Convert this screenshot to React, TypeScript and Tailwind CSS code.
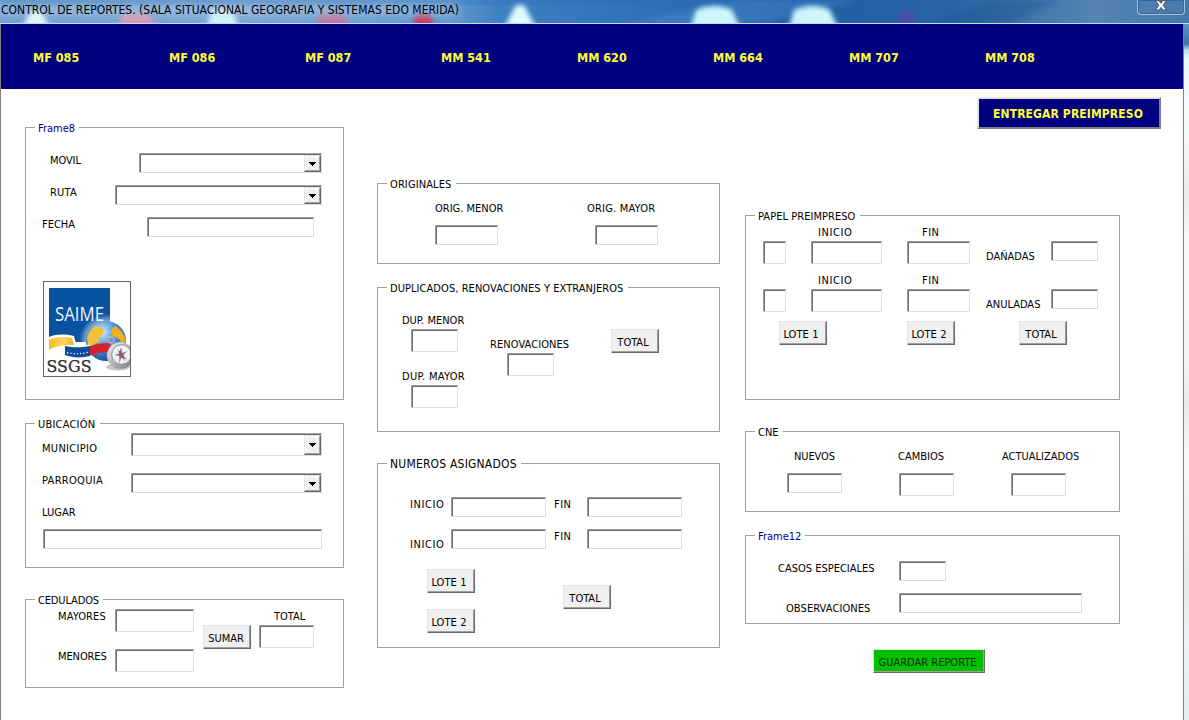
import type { ReactNode } from "react";

type BoxProps = { className: string; children?: ReactNode };

function Label({ className, children }: BoxProps) {
  return (
    <div className={`h-[14px] shrink-0 whitespace-nowrap text-[11px] leading-[16px] ${className}`}>
      {children}
    </div>
  );
}

function Field({ className }: { className: string }) {
  return (
    <div
      className={`shrink-0 border border-t-[#a0a0a0] border-r-[#dcdcdc] border-b-[#dcdcdc] border-l-[#a0a0a0] ${className}`}
    >
      <div className="h-full w-full border-t border-l border-[#696969] bg-white" />
    </div>
  );
}

function Combo({ className }: { className: string }) {
  return (
    <div
      className={`shrink-0 border border-t-[#a0a0a0] border-r-[#dcdcdc] border-b-[#dcdcdc] border-l-[#a0a0a0] ${className}`}
    >
      <div className="flex h-full w-full justify-end border-t border-l border-[#696969] bg-white">
        <div className="flex w-[17px] items-center justify-center border border-t-[#e3e3e3] border-r-[#696969] border-b-[#696969] border-l-[#e3e3e3] bg-[#f0f0f0] shadow-[inset_-1px_-1px_0_#a0a0a0,inset_1px_1px_0_#ffffff]">
          <svg width="7" height="4" viewBox="0 0 7 4" shapeRendering="crispEdges">
            <path d="M0 0h7v1h-1v1h-1v1h-1v1h-1v-1h-1v-1h-1v-1h-1z" fill="#000" />
          </svg>
        </div>
      </div>
    </div>
  );
}

function Button({ className, children }: BoxProps) {
  return (
    <button
      className={`h-[24px] w-[48px] shrink-0 whitespace-nowrap border border-t-[#e3e3e3] border-r-[#696969] border-b-[#696969] border-l-[#e3e3e3] bg-[#f0f0f0] pt-[4px] text-center text-[11px] leading-[18px] shadow-[inset_-1px_-1px_0_#a0a0a0] ${className}`}
    >
      {children}
    </button>
  );
}

function Frame({
  className,
  legend,
  legendClass,
  children,
}: {
  className: string;
  legend: string;
  legendClass: string;
  children: ReactNode;
}) {
  return (
    <section className={`flex shrink-0 flex-col border border-[#a0a0a0] ${className}`}>
      <h2
        className={`-mt-[8px] ml-[9px] h-[14px] shrink-0 whitespace-nowrap bg-white pl-[3px] text-[11px] leading-[17px] ${legendClass}`}
      >
        {legend}
      </h2>
      {children}
    </section>
  );
}

const Row = ({ className, children }: BoxProps) => (
  <div className={`flex shrink-0 items-start ${className}`}>{children}</div>
);

const MENU = ["MF 085", "MF 086", "MF 087", "MM 541", "MM 620", "MM 664", "MM 707", "MM 708"];

function TitleBar() {
  return (
    <header className="relative flex h-[24px] justify-between overflow-hidden border-b border-[#c5d9ee] bg-[linear-gradient(90deg,#6f9fd0_0%,#7ba5d3_20%,#5f97cf_38%,#3f80c4_42%,#3577bd_50%,#1f5fa6_68%,#2a64a4_80%,#5684b4_92%,#4478ae_100%)]">
      <svg className="absolute inset-0" width="1189" height="24" viewBox="0 0 1189 24">
        <defs>
          <filter id="soft" x="-50%" y="-50%" width="200%" height="200%">
            <feGaussianBlur stdDeviation="2.6" />
          </filter>
          <filter id="halo" x="-20%" y="-80%" width="140%" height="260%">
            <feGaussianBlur stdDeviation="5" />
          </filter>
        </defs>
        <path d="M0 0H700L640 4H0z" fill="#2868ad" opacity=".45" filter="url(#soft)" />
        <path d="M620 24L740 0H860L760 24z" fill="#5d9bd8" opacity=".3" filter="url(#soft)" />
        <path d="M930 24L990 0H1060L1010 24z" fill="#16508f" opacity=".35" filter="url(#soft)" />
        <g filter="url(#soft)">
          <path d="M22 28L31 10h10l9 18z" fill="#e2f8ff" />
          <path d="M116 28l8-15h22l14 15z" fill="#d39bb4" />
          <path d="M207 28l5-20h20l7 20z" fill="#d2f4fb" />
          <path d="M312 28l10-15h22l6 15z" fill="#b7799f" />
          <path d="M411 28l6-14h12l8 14z" fill="#c33c63" />
          <path d="M503 30l13-25h8l13 25z" fill="#dffcff" />
          <path d="M690 30l6-20q18-8 36 0l9 20z" fill="#cdf6fd" />
          <path d="M788 30l6-20q20-8 36 0l9 20z" fill="#cdf6fd" />
          <path d="M897 25l6-16h6l8 16z" fill="#4b4ba8" />
        </g>
        <rect x="-6" y="5" width="466" height="10" rx="5" fill="#c3d8ee" opacity=".5" filter="url(#halo)" />
      </svg>
      <h1 className="relative ml-[1px] mt-[2px] h-[16px] whitespace-nowrap text-[12px] leading-[16px] tracking-[0.015px] text-black">
        CONTROL DE REPORTES. (SALA SITUACIONAL GEOGRAFIA Y SISTEMAS EDO MERIDA)
      </h1>
      <div className="relative mr-[4px] flex h-[15px] w-[48px] justify-center rounded-b-[4px] border border-t-0 border-[#a9c3de] bg-[#4f7fb2]/40 shadow-[inset_0_0_0_1px_#39659a]">
        <svg width="14" height="11" viewBox="0 0 14 11">
          <path d="M1.500.6h3.500L7 3.300 9 .6h3.500L9.100 5.300l3.400 4.800H9L7 7.400 5 10.100H1.500l3.400-4.800z" fill="#fff" stroke="#3c4656" strokeWidth=".9" />
        </svg>
      </div>
    </header>
  );
}

function Logo() {
  return (
    <svg className="ml-[17px] mt-[32px] shrink-0" width="88" height="96" viewBox="0 0 88 96">
      <defs>
        <radialGradient id="globe" cx="40%" cy="28%" r="75%">
          <stop offset="0" stopColor="#d5ecfb" />
          <stop offset=".4" stopColor="#5f9cdb" />
          <stop offset="1" stopColor="#174f9f" />
        </radialGradient>
        <radialGradient id="glow">
          <stop offset=".55" stopColor="#fff" stopOpacity=".85" />
          <stop offset="1" stopColor="#fff" stopOpacity="0" />
        </radialGradient>
        <linearGradient id="metal" x1="0" y1="0" x2="1" y2="1">
          <stop offset="0" stopColor="#f4f4f4" />
          <stop offset=".5" stopColor="#b5b5b8" />
          <stop offset="1" stopColor="#77787c" />
        </linearGradient>
        <linearGradient id="gold" x1="0" y1="0" x2="1" y2="0">
          <stop offset="0" stopColor="#f4bd22" />
          <stop offset=".6" stopColor="#fbd560" />
          <stop offset="1" stopColor="#eeb01d" />
        </linearGradient>
        <clipPath id="frame">
          <rect x="1" y="1" width="86" height="94" />
        </clipPath>
      </defs>
      <rect x=".5" y=".5" width="87" height="95" fill="#fff" stroke="#646464" />
      <g clipPath="url(#frame)">
        <rect x="6" y="7" width="61" height="54" fill="#0753a1" />
        <circle cx="63" cy="60" r="27" fill="url(#glow)" />
        <text x="12" y="39.500" fontSize="20.500" textLength="49" lengthAdjust="spacingAndGlyphs" fill="#eef6ff" fontFamily="'Open Sans','Noto Sans',sans-serif">
          SAIME
        </text>
        <circle cx="63" cy="60" r="20" fill="url(#globe)" />
        <path d="M44 58c1-6 4-10 8-13l5 1 4 3-1 4-4 3v5l-5 2-2 4-4-3z" fill="#f2c13c" />
        <path d="M68 49l4-4c5 3 10 8 11 16l-4 1-4-5-6-2z" fill="#f0ae22" />
        <path d="M64 72l7-2 2 5-5 3z" fill="#e9b53a" />
        <path d="M6 56c8-3 15-3 25-1l2 8 14 1v13c-8 2-16 1-25-1l-1-9c-6-1-10 0-15 3z" fill="#fff" />
        <path d="M6 58.500c9-3 17-3 23-1.500l2 7c-8 0-17 0-25 5z" fill="url(#gold)" />
        <path d="M22 65c9 2 17 1.500 25 0v10c-9 2-17 2-25-1z" fill="#0d4b9b" />
        <path d="M24 71.500c8 1.800 14 1.500 22-.3" fill="none" stroke="#fff" strokeWidth="1.300" strokeDasharray="1.200 2.100" />
        <path d="M47 65c7-2 13-3 20-3v9c-7 0-13 1-20 3.500z" fill="#d8202d" />
        <ellipse cx="75" cy="86" rx="12" ry="3.500" fill="#8b8b90" opacity=".5" />
        <circle cx="68" cy="59" r="3" fill="none" stroke="#b9b2aa" strokeWidth="1.300" />
        <circle cx="77.500" cy="74.500" r="13.500" fill="url(#metal)" />
        <circle cx="78.500" cy="73.500" r="9.800" fill="#eef0f2" stroke="#8d8f94" strokeWidth="1" />
        <path d="M78 66l1.300 6 5-2-4 4 3.500 5-5-3-2.500 6v-7l-5-1 5-1.500z" fill="#6d7d9a" />
        <path d="M74.500 68l4.500 5 3 7-4.500-5z" fill="#c83a3a" />
        <text x="3.500" y="90.500" fontSize="16" textLength="45" lengthAdjust="spacingAndGlyphs" fill="#2b2b2b" stroke="#2b2b2b" strokeWidth=".25" fontFamily="'DejaVu Serif','Liberation Serif',serif">
          SSGS
        </text>
      </g>
    </svg>
  );
}

function LeftColumn() {
  return (
    <div className="ml-[24px] flex w-[319px] shrink-0 flex-col pt-[38px]">
      <Frame className="h-[273px]" legend="Frame8" legendClass="w-[44px] text-[#00008b]">
        <Row className="mt-[19px] h-[32px]">
          <Label className="ml-[24px] w-[60px] tracking-[-0.1px]">MOVIL</Label>
          <Combo className="ml-[29px] h-[20px] w-[183px]" />
        </Row>
        <Row className="h-[32px]">
          <Label className="ml-[24px] w-[60px] tracking-[0.2px]">RUTA</Label>
          <Combo className="ml-[5px] h-[20px] w-[207px]" />
        </Row>
        <Row className="h-[32px]">
          <Label className="ml-[16px] w-[60px]">FECHA</Label>
          <Field className="ml-[45px] h-[20px] w-[167px]" />
        </Row>
        <Logo />
      </Frame>

      <Frame className="mt-[23px] h-[145px]" legend="UBICACIÓN" legendClass="w-[65px] tracking-[0.2px]">
        <Row className="mt-[3px] h-[40px]">
          <Label className="ml-[16px] mt-[8px] w-[80px] tracking-[0.3px]">MUNICIPIO</Label>
          <Combo className="ml-[9px] h-[23px] w-[191px]" />
        </Row>
        <Row className="h-[32px]">
          <Label className="ml-[16px] w-[80px] tracking-[0.3px]">PARROQUIA</Label>
          <Combo className="ml-[9px] h-[20px] w-[191px]" />
        </Row>
        <Label className="ml-[16px] w-[80px]">LUGAR</Label>
        <Field className="ml-[17px] mt-[10px] h-[20px] w-[279px]" />
      </Frame>

      <Frame className="mt-[31px] h-[89px]" legend="CEDULADOS" legendClass="w-[68px] tracking-[-0.15px]">
        <Row className="mt-[3px]">
          <div className="ml-[32px] flex w-[137px] flex-col gap-[17px]">
            <Row className="h-[23px]">
              <Label className="w-[57px] tracking-[0.1px]">MAYORES</Label>
              <Field className="h-[23px] w-[79px]" />
            </Row>
            <Row className="h-[23px]">
              <Label className="w-[57px] tracking-[-0.1px]">MENORES</Label>
              <Field className="h-[23px] w-[79px]" />
            </Row>
          </div>
          <Button className="ml-[8px] mt-[16px] pr-[2px]">SUMAR</Button>
          <div className="ml-[8px] flex flex-col gap-[2px]">
            <Label className="ml-[15px] w-[40px]">TOTAL</Label>
            <Field className="h-[23px] w-[55px]" />
          </div>
        </Row>
      </Frame>
    </div>
  );
}

function MiddleColumn() {
  return (
    <div className="ml-[33px] flex w-[343px] shrink-0 flex-col pt-[94px]">
      <Frame className="h-[81px]" legend="ORIGINALES" legendClass="w-[69px] tracking-[0.1px]">
        <Row className="mt-[11px]">
          <div className="ml-[57px] flex w-[152px] flex-col">
            <Label className="w-[80px]">ORIG. MENOR</Label>
            <Field className="mt-[10px] h-[20px] w-[63px]" />
          </div>
          <div className="flex flex-col">
            <Label className="w-[80px] tracking-[0.2px]">ORIG. MAYOR</Label>
            <Field className="ml-[8px] mt-[10px] h-[20px] w-[63px]" />
          </div>
        </Row>
      </Frame>

      <Frame
        className="mt-[23px] h-[145px]"
        legend="DUPLICADOS, RENOVACIONES Y EXTRANJEROS"
        legendClass="w-[241px] tracking-[0.06px]"
      >
        <Row className="mt-[19px]">
          <div className="ml-[24px] flex w-[88px] flex-col">
            <Label className="w-[70px]">DUP. MENOR</Label>
            <Field className="ml-[9px] mt-[2px] h-[23px] w-[47px]" />
            <Label className="mt-[17px] w-[70px] tracking-[0.3px]">DUP. MAYOR</Label>
            <Field className="ml-[9px] mt-[2px] h-[23px] w-[47px]" />
          </div>
          <div className="mt-[24px] flex w-[121px] flex-col">
            <Label className="w-[80px] tracking-[0.07px]">RENOVACIONES</Label>
            <Field className="ml-[17px] mt-[2px] h-[23px] w-[47px]" />
          </div>
          <Button className="mt-[16px] pr-[4px]">TOTAL</Button>
        </Row>
      </Frame>

      <Frame
        className="mt-[31px] h-[185px]"
        legend="NUMEROS ASIGNADOS"
        legendClass="w-[134px] text-[12px] tracking-[0.2px]"
      >
        <Row className="mt-[27px] h-[32px]">
          <Label className="ml-[32px] w-[41px] tracking-[0.6px]">INICIO</Label>
          <Field className="h-[20px] w-[95px]" />
          <Label className="ml-[8px] w-[33px] tracking-[0.5px]">FIN</Label>
          <Field className="h-[20px] w-[95px]" />
        </Row>
        <Row className="h-[40px]">
          <Label className="ml-[32px] mt-[8px] w-[41px] tracking-[0.6px]">INICIO</Label>
          <Field className="h-[20px] w-[95px]" />
          <Label className="ml-[8px] w-[33px] tracking-[0.5px]">FIN</Label>
          <Field className="h-[20px] w-[95px]" />
        </Row>
        <Row className="">
          <div className="ml-[49px] flex flex-col gap-[16px]">
            <Button className="pr-[4px] tracking-[0.1px]">LOTE 1</Button>
            <Button className="pr-[4px] tracking-[0.1px]">LOTE 2</Button>
          </div>
          <Button className="ml-[88px] mt-[16px] pr-[4px]">TOTAL</Button>
        </Row>
      </Frame>
    </div>
  );
}

function PaperRow({ label }: { label: string }) {
  return (
    <Row className="h-[48px]">
      <Field className="ml-[17px] mt-[16px] h-[23px] w-[23px]" />
      <div className="ml-[25px] flex w-[71px] flex-col gap-[2px]">
        <Label className="ml-[7px] w-[40px] tracking-[0.6px]">INICIO</Label>
        <Field className="h-[23px] w-[71px]" />
      </div>
      <div className="ml-[25px] flex w-[63px] flex-col gap-[2px]">
        <Label className="ml-[15px] w-[30px] tracking-[0.5px]">FIN</Label>
        <Field className="h-[23px] w-[63px]" />
      </div>
      <Label className="ml-[16px] mt-[24px] w-[65px]">{label}</Label>
      <Field className="mt-[16px] h-[20px] w-[47px]" />
    </Row>
  );
}

function RightColumn() {
  return (
    <div className="ml-[25px] flex w-[375px] shrink-0 flex-col pt-[8px]">
      <button className="ml-[232px] h-[32px] w-[184px] shrink-0 whitespace-nowrap border-2 border-t-[#e3e3e3] border-r-[#7c7c8c] border-b-[#7c7c8c] border-l-[#e3e3e3] bg-[#000080] pr-[2px] pt-[2px] text-[12px] leading-[26px] font-bold tracking-[0.12px] text-[#ffff33]">
        ENTREGAR PREIMPRESO
      </button>

      <Frame className="mt-[86px] h-[185px]" legend="PAPEL PREIMPRESO" legendClass="w-[105px] tracking-[0.05px]">
        <div className="mt-[3px] flex flex-col">
          <PaperRow label="DAÑADAS" />
          <PaperRow label="ANULADAS" />
        </div>
        <Row className="">
          <Button className="ml-[33px] pr-[4px] tracking-[0.1px]">LOTE 1</Button>
          <Button className="ml-[80px] pr-[4px] tracking-[0.1px]">LOTE 2</Button>
          <Button className="ml-[64px] pr-[4px]">TOTAL</Button>
        </Row>
      </Frame>

      <Frame className="mt-[31px] h-[81px]" legend="CNE" legendClass="w-[28px]">
        <Row className="mt-[11px]">
          <div className="ml-[41px] flex w-[112px] flex-col">
            <Label className="ml-[7px] w-[50px] tracking-[-0.1px]">NUEVOS</Label>
            <Field className="mt-[10px] h-[20px] w-[55px]" />
          </div>
          <div className="flex w-[103px] flex-col">
            <Label className="-ml-[1px] w-[60px]">CAMBIOS</Label>
            <Field className="mt-[10px] h-[23px] w-[55px]" />
          </div>
          <div className="flex flex-col">
            <Label className="w-[80px]">ACTUALIZADOS</Label>
            <Field className="ml-[9px] mt-[10px] h-[23px] w-[55px]" />
          </div>
        </Row>
      </Frame>

      <Frame className="mt-[23px] h-[89px]" legend="Frame12" legendClass="w-[50px] text-[#00008b]">
        <Row className="mt-[19px] h-[32px]">
          <Label className="ml-[32px] w-[121px]">CASOS ESPECIALES</Label>
          <Field className="h-[20px] w-[47px]" />
        </Row>
        <Row className="h-[32px]">
          <Label className="ml-[40px] mt-[8px] w-[113px] tracking-[0.08px]">OBSERVACIONES</Label>
          <Field className="h-[20px] w-[183px]" />
        </Row>
      </Frame>

      <button className="ml-[128px] mt-[25px] h-[24px] w-[112px] shrink-0 whitespace-nowrap border border-t-[#e3e3e3] border-r-[#696969] border-b-[#696969] border-l-[#e3e3e3] bg-[#00c000] pr-[3px] pt-[3px] text-[11px] leading-[19px] text-[#063006] shadow-[inset_-1px_-1px_0_#a0a0a0]">
        GUARDAR REPORTE
      </button>
    </div>
  );
}

export default function App() {
  return (
    <div className="flex h-[720px] w-[1189px] flex-col overflow-hidden bg-white font-['DejaVu_Sans_Condensed','DejaVu_Sans',sans-serif] text-black">
      <TitleBar />
      <div className="flex min-h-0 flex-1">
        <div className="flex w-[1184px] shrink-0 flex-col border-r border-l border-[#808080]">
          <nav className="flex h-[65px] shrink-0 bg-[#000080] pl-[32px] pt-[25px]">
            {MENU.map((item) => (
              <a key={item} className="h-[18px] w-[136px] text-[12.5px] leading-[18px] font-bold text-[#ffff33]">
                {item}
              </a>
            ))}
          </nav>
          <main className="flex min-h-0 flex-1 overflow-hidden">
            <LeftColumn />
            <MiddleColumn />
            <RightColumn />
          </main>
        </div>
        <div className="flex-1 bg-[linear-gradient(180deg,#5f93c4_0px,#3f74aa_20px,#b9dcf0_26px,#e8f8fd_36px,#f5fafb_80px,#f4f5f5_130px,#e9eaea_170px,#f7f8f8_220px,#f3f4f4_340px,#e6e7e7_380px,#f7f8f8_430px,#f0f0f0_500px,#e4e8e9_560px,#edf3f4_620px,#e2ecef_696px)]" />
      </div>
    </div>
  );
}
